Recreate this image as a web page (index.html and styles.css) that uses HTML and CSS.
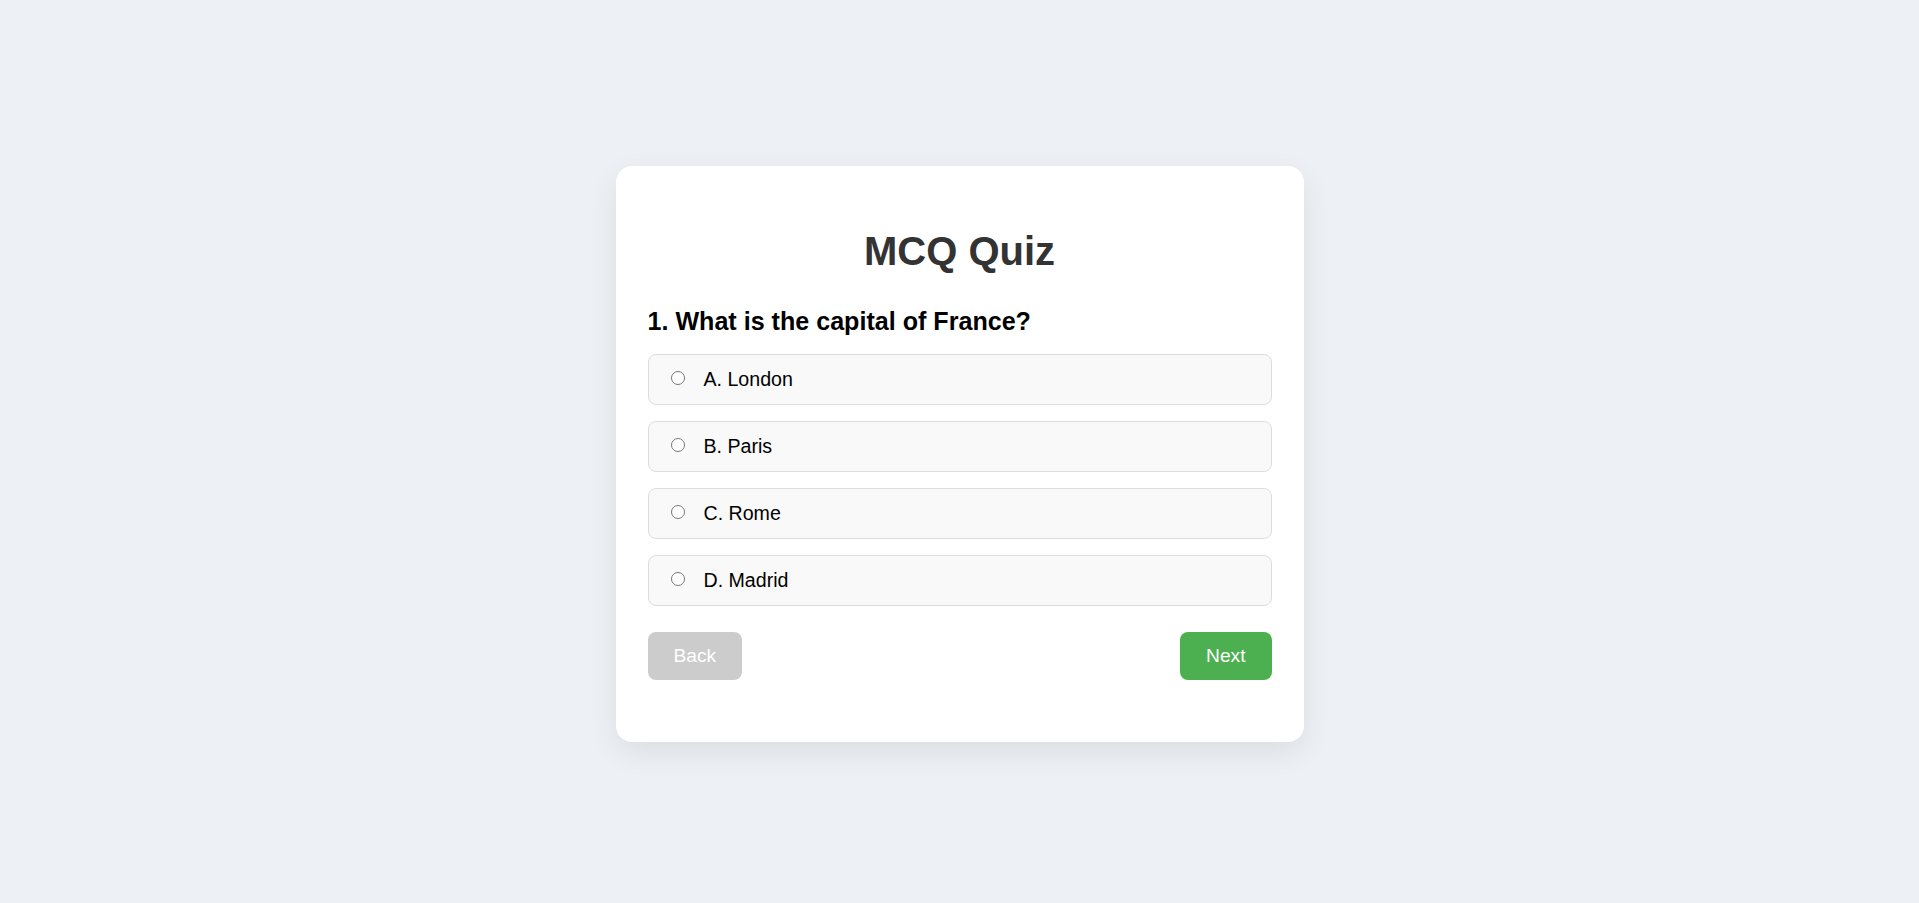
FILE: index.html
```html
<!DOCTYPE html>
<html lang="en">
<head>
<meta charset="UTF-8">
<title>MCQ Quiz</title>
<link rel="stylesheet" href="styles.css">
</head>
<body>
<main class="page">
  <section class="card">
    <h1 class="title">MCQ Quiz</h1>
    <h2 class="question">1. What is the capital of France?</h2>
    <div class="options">
      <label class="option"><input class="radio" type="radio" name="q1"><span class="opt-text">A. London</span></label>
      <label class="option"><input class="radio" type="radio" name="q1"><span class="opt-text">B. Paris</span></label>
      <label class="option"><input class="radio" type="radio" name="q1"><span class="opt-text">C. Rome</span></label>
      <label class="option"><input class="radio" type="radio" name="q1"><span class="opt-text">D. Madrid</span></label>
    </div>
    <div class="actions">
      <button class="btn btn-back" type="button" disabled>Back</button>
      <button class="btn btn-next" type="button">Next</button>
    </div>
  </section>
</main>
</body>
</html>
```
FILE: styles.css
```css
* { box-sizing: border-box; }

html, body {
  margin: 0;
  padding: 0;
}

body {
  background: #edf0f4;
  font-family: "Liberation Sans", Arial, sans-serif;
}

.page {
  min-height: 100vh;
  display: flex;
  align-items: center;
  justify-content: center;
  padding-top: 4px;
}

.card {
  width: 688px;
  background: #ffffff;
  border-radius: 16px;
  padding: 32px 32px 62px;
  box-shadow: 0 10px 30px rgba(0, 0, 0, 0.08);
}

.title {
  margin: 31px 0 33px;
  text-align: center;
  font-size: 40px;
  font-weight: bold;
  color: #333333;
}

.question {
  margin: 0 0 19px;
  font-size: 25.1px;
  line-height: 28px;
  font-weight: bold;
  color: #000000;
}

.options {
  display: flex;
  flex-direction: column;
  gap: 16px;
}

.option {
  display: flex;
  align-items: flex-start;
  padding: 13px 20px 13px 22px;
  background: #f9f9f9;
  border: 1px solid #dddddd;
  border-radius: 8px;
  font-size: 19.6px;
  line-height: 23px;
  color: #000000;
  cursor: pointer;
}

.radio {
  -webkit-appearance: none;
  appearance: none;
  flex: none;
  width: 14px;
  height: 14px;
  margin: 3px 19px 0 0;
  border: 1px solid #767676;
  border-radius: 50%;
  background: #ffffff;
}

.actions {
  margin-top: 26px;
  display: flex;
  justify-content: space-between;
}

.btn {
  border: none;
  border-radius: 8px;
  padding: 12px 26px;
  font-family: "Liberation Sans", Arial, sans-serif;
  font-size: 19.2px;
  line-height: 24px;
  color: #ffffff;
  cursor: pointer;
}

.btn-back {
  background: #cccccc;
  cursor: default;
}

.btn-next {
  background: #4caf50;
}
```
